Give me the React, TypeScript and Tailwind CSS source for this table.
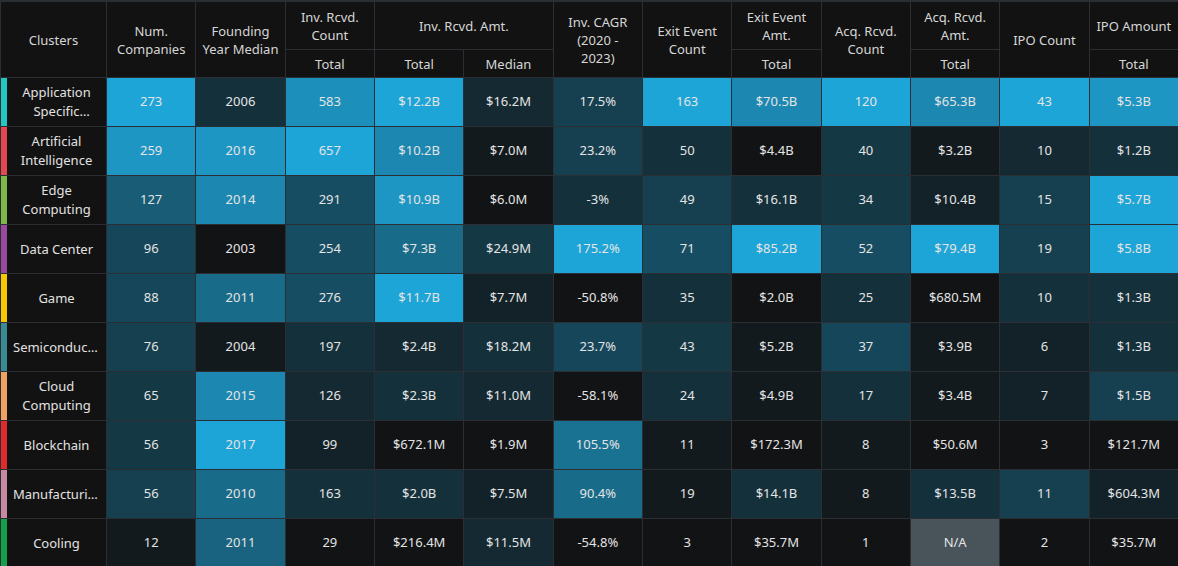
import React from 'react'

// heat scale, dark -> bright blue (index 0..20)
const heat = [
    'bg-[#121314]',
    'bg-[#131a1e]',
    'bg-[#132228]',
    'bg-[#142931]',
    'bg-[#14303b]',
    'bg-[#153845]',
    'bg-[#163f4f]',
    'bg-[#164659]',
    'bg-[#174d62]',
    'bg-[#17556c]',
    'bg-[#185c76]',
    'bg-[#196380]',
    'bg-[#196b8a]',
    'bg-[#1a7293]',
    'bg-[#1a799d]',
    'bg-[#1b81a7]',
    'bg-[#1c88b1]',
    'bg-[#1c8fbb]',
    'bg-[#1d96c4]',
    'bg-[#1d9ece]',
    'bg-[#1ea5d8]',
]

type Cell = [string, number]

type Row = {
    name: string
    accent: string
    clamp?: boolean
    cells: Cell[]
}

const rows: Row[] = [
    {
        name: 'Application Specific Integrated Circuit',
        accent: 'bg-[#22c7c1]',
        clamp: true,
        cells: [
            ['273', 20], ['2006', 4], ['583', 17], ['$12.2B', 20], ['$16.2M', 3], ['17.5%', 6],
            ['163', 20], ['$70.5B', 16], ['120', 20], ['$65.3B', 16], ['43', 20], ['$5.3B', 18],
        ],
    },
    {
        name: 'Artificial Intelligence',
        accent: 'bg-[#e4474f]',
        cells: [
            ['259', 18], ['2016', 18], ['657', 20], ['$10.2B', 16], ['$7.0M', 1], ['23.2%', 6],
            ['50', 4], ['$4.4B', 0], ['40', 5], ['$3.2B', 1], ['10', 3], ['$1.2B', 4],
        ],
    },
    {
        name: 'Edge Computing',
        accent: 'bg-[#7cb94a]',
        cells: [
            ['127', 10], ['2014', 16], ['291', 8], ['$10.9B', 18], ['$6.0M', 0], ['-3%', 4],
            ['49', 6], ['$16.1B', 4], ['34', 5], ['$10.4B', 2], ['15', 6], ['$5.7B', 20],
        ],
    },
    {
        name: 'Data Center',
        accent: 'bg-[#9a4a9e]',
        cells: [
            ['96', 7], ['2003', 0], ['254', 8], ['$7.3B', 12], ['$24.9M', 5], ['175.2%', 20],
            ['71', 8], ['$85.2B', 20], ['52', 8], ['$79.4B', 20], ['19', 6], ['$5.8B', 20],
        ],
    },
    {
        name: 'Game',
        accent: 'bg-[#f6c600]',
        cells: [
            ['88', 7], ['2011', 12], ['276', 8], ['$11.7B', 20], ['$7.7M', 2], ['-50.8%', 0],
            ['35', 4], ['$2.0B', 0], ['25', 4], ['$680.5M', 0], ['10', 4], ['$1.3B', 4],
        ],
    },
    {
        name: 'Semiconductors',
        accent: 'bg-[#3a8a96]',
        cells: [
            ['76', 6], ['2004', 1], ['197', 4], ['$2.4B', 3], ['$18.2M', 4], ['23.7%', 7],
            ['43', 5], ['$5.2B', 1], ['37', 7], ['$3.9B', 1], ['6', 2], ['$1.3B', 4],
        ],
    },
    {
        name: 'Cloud Computing',
        accent: 'bg-[#f0a263]',
        cells: [
            ['65', 5], ['2015', 16], ['126', 3], ['$2.3B', 4], ['$11.0M', 3], ['-58.1%', 0],
            ['24', 4], ['$4.9B', 1], ['17', 4], ['$3.4B', 1], ['7', 2], ['$1.5B', 6],
        ],
    },
    {
        name: 'Blockchain',
        accent: 'bg-[#e02b2b]',
        cells: [
            ['56', 5], ['2017', 20], ['99', 2], ['$672.1M', 0], ['$1.9M', 0], ['105.5%', 13],
            ['11', 1], ['$172.3M', 0], ['8', 1], ['$50.6M', 0], ['3', 0], ['$121.7M', 0],
        ],
    },
    {
        name: 'Manufacturing',
        accent: 'bg-[#c68ba0]',
        cells: [
            ['56', 6], ['2010', 12], ['163', 4], ['$2.0B', 4], ['$7.5M', 2], ['90.4%', 12],
            ['19', 1], ['$14.1B', 4], ['8', 1], ['$13.5B', 4], ['11', 6], ['$604.3M', 2],
        ],
    },
    {
        name: 'Cooling',
        accent: 'bg-[#14a04a]',
        cells: [
            ['12', 1], ['2011', 11], ['29', 0], ['$216.4M', 0], ['$11.5M', 3], ['-54.8%', 0],
            ['3', 0], ['$35.7M', 0], ['1', 0], ['N/A', -1], ['2', 0], ['$35.7M', 0],
        ],
    },
]

const head = 'flex items-center justify-center bg-[#121212] px-1 text-center leading-[18px] text-[#d6d6d6]'

function App() {
    return (
        <div
            className="min-h-screen bg-[#2b2e33] pl-px pt-[2px] text-[13px]"
            style={{ fontFamily: '"Noto Sans", "Open Sans", sans-serif' }}
        >
            <div className="grid grid-cols-[105px_repeat(12,minmax(0,1fr))] grid-rows-[47px_27px_repeat(10,48px)] gap-px">
                {/* header, first band */}
                <div className={`${head} row-span-2`}>Clusters</div>
                <div className={`${head} row-span-2`}>Num.<br />Companies</div>
                <div className={`${head} row-span-2`}>Founding<br />Year Median</div>
                <div className={head}>Inv. Rcvd.<br />Count</div>
                <div className={`${head} col-span-2`}>Inv. Rcvd. Amt.</div>
                <div className={`${head} row-span-2`}>Inv. CAGR<br />(2020 -<br />2023)</div>
                <div className={`${head} row-span-2`}>Exit Event<br />Count</div>
                <div className={head}>Exit Event<br />Amt.</div>
                <div className={`${head} row-span-2`}>Acq. Rcvd.<br />Count</div>
                <div className={head}>Acq. Rcvd.<br />Amt.</div>
                <div className={`${head} row-span-2`}>IPO Count</div>
                <div className={`${head} whitespace-nowrap`}>IPO Amount</div>

                {/* header, second band */}
                <div className={head}>Total</div>
                <div className={head}>Total</div>
                <div className={head}>Median</div>
                <div className={head}>Total</div>
                <div className={head}>Total</div>
                <div className={head}>Total</div>

                {rows.map((row) => (
                    <React.Fragment key={row.name}>
                        <div className="flex bg-[#121212]">
                            <div className={`w-[6px] shrink-0 ${row.accent}`} />
                            <div className="flex min-w-0 flex-1 items-center justify-center px-1.5 text-center leading-[19px] text-[#e2e2e2]">
                                {row.clamp ? (
                                    <span className="line-clamp-2">{row.name}</span>
                                ) : row.name.includes(' ') ? (
                                    <span>{row.name}</span>
                                ) : (
                                    <span className="truncate">{row.name}</span>
                                )}
                            </div>
                        </div>
                        {row.cells.map(([value, level], i) => (
                            <div
                                key={i}
                                className={`flex items-center justify-center text-[#e4e4e4] ${
                                    level < 0 ? 'bg-[#48535a]' : heat[level]
                                }`}
                            >
                                {value}
                            </div>
                        ))}
                    </React.Fragment>
                ))}
            </div>
        </div>
    )
}

export default App
